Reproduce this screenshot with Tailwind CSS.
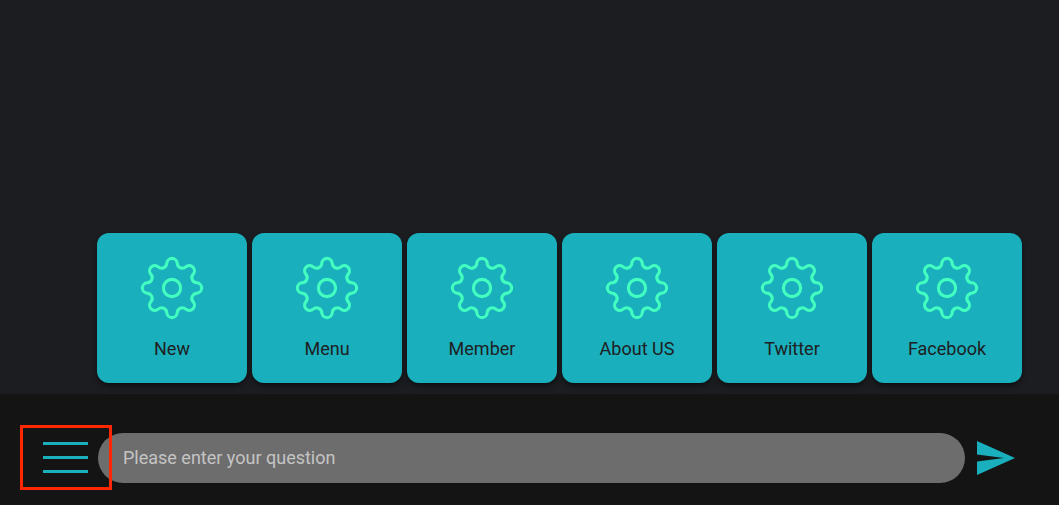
<!DOCTYPE html>
<html lang="en">
<head>
<meta charset="utf-8">
<meta name="viewport" content="width=device-width, initial-scale=1">
<title>Chat</title>
<script src="https://cdn.jsdelivr.net/npm/@tailwindcss/browser@4"></script>
</head>
<body class="flex min-h-screen flex-col bg-[#1c1d21] font-[Roboto,sans-serif] text-lg text-[#1e2022]">
<svg class="hidden" aria-hidden="true">
  <symbol id="gear" viewBox="-32 -32 64 64">
    <g fill="none" stroke="#43ffc0" stroke-width="3.1">
      <circle r="8.6"/>
      <path d="M-5.19-24.77A5.2 5.2 0 0 1 5.19-24.77A5.2 5.2 0 0 0 13.85-21.18A5.2 5.2 0 0 1 21.18-13.85A5.2 5.2 0 0 0 24.77-5.19A5.2 5.2 0 0 1 24.77 5.19A5.2 5.2 0 0 0 21.18 13.85A5.2 5.2 0 0 1 13.85 21.18A5.2 5.2 0 0 0 5.19 24.77A5.2 5.2 0 0 1-5.19 24.77A5.2 5.2 0 0 0-13.85 21.18A5.2 5.2 0 0 1-21.18 13.85A5.2 5.2 0 0 0-24.77 5.19A5.2 5.2 0 0 1-24.77-5.19A5.2 5.2 0 0 0-21.18-13.85A5.2 5.2 0 0 1-13.85-21.18A5.2 5.2 0 0 0-5.19-24.77Z"/>
    </g>
  </symbol>
</svg>
<main class="flex flex-1 flex-col justify-end pr-9 pb-[11px] pl-[97px]">
  <nav class="flex gap-[5px]" aria-label="Quick menu">
    <button class="flex h-[150px] w-[150px] flex-col items-center rounded-xl bg-[#1aafbc] pt-[23px] shadow-md shadow-black/40"><svg class="size-16" aria-hidden="true"><use href="#gear"/></svg><span class="mt-[15px]">New</span></button>
    <button class="flex h-[150px] w-[150px] flex-col items-center rounded-xl bg-[#1aafbc] pt-[23px] shadow-md shadow-black/40"><svg class="size-16" aria-hidden="true"><use href="#gear"/></svg><span class="mt-[15px]">Menu</span></button>
    <button class="flex h-[150px] w-[150px] flex-col items-center rounded-xl bg-[#1aafbc] pt-[23px] shadow-md shadow-black/40"><svg class="size-16" aria-hidden="true"><use href="#gear"/></svg><span class="mt-[15px]">Member</span></button>
    <button class="flex h-[150px] w-[150px] flex-col items-center rounded-xl bg-[#1aafbc] pt-[23px] shadow-md shadow-black/40"><svg class="size-16" aria-hidden="true"><use href="#gear"/></svg><span class="mt-[15px]">About US</span></button>
    <button class="flex h-[150px] w-[150px] flex-col items-center rounded-xl bg-[#1aafbc] pt-[23px] shadow-md shadow-black/40"><svg class="size-16" aria-hidden="true"><use href="#gear"/></svg><span class="mt-[15px]">Twitter</span></button>
    <button class="flex h-[150px] w-[150px] flex-col items-center rounded-xl bg-[#1aafbc] pt-[23px] shadow-md shadow-black/40"><svg class="size-16" aria-hidden="true"><use href="#gear"/></svg><span class="mt-[15px]">Facebook</span></button>
  </nav>
</main>
<form class="flex items-center bg-[#141414] pt-[39px] pr-11 pb-[22px] pl-[43px]">
  <button type="button" aria-label="Toggle menu" class="relative mr-[10px] mb-0.5 flex w-[45px] shrink-0 flex-col gap-[11px]">
    <span class="h-[3px] bg-[#1aafbc]"></span>
    <span class="h-[3px] bg-[#1aafbc]"></span>
    <span class="h-[3px] bg-[#1aafbc]"></span>
    <span class="absolute -top-[17px] -right-6 -bottom-[17px] -left-[23px] border-3 border-[#ff2600]"></span>
  </button>
  <input type="text" aria-label="Question" placeholder="Please enter your question" class="h-[50px] min-w-0 flex-1 rounded-full bg-[#6d6d6d] pr-6 pb-0.5 pl-[25px] text-white outline-none placeholder:text-[#c4c4c4]">
  <button type="submit" aria-label="Send" class="ml-3 shrink-0">
    <svg class="block h-[34px] w-[38px]" viewBox="0 0 38 34" fill="#1aafbc" aria-hidden="true"><path d="M0 0L38 17L0 34V20.6L27 17L0 13.4Z"/></svg>
  </button>
</form>
</body>
</html>
